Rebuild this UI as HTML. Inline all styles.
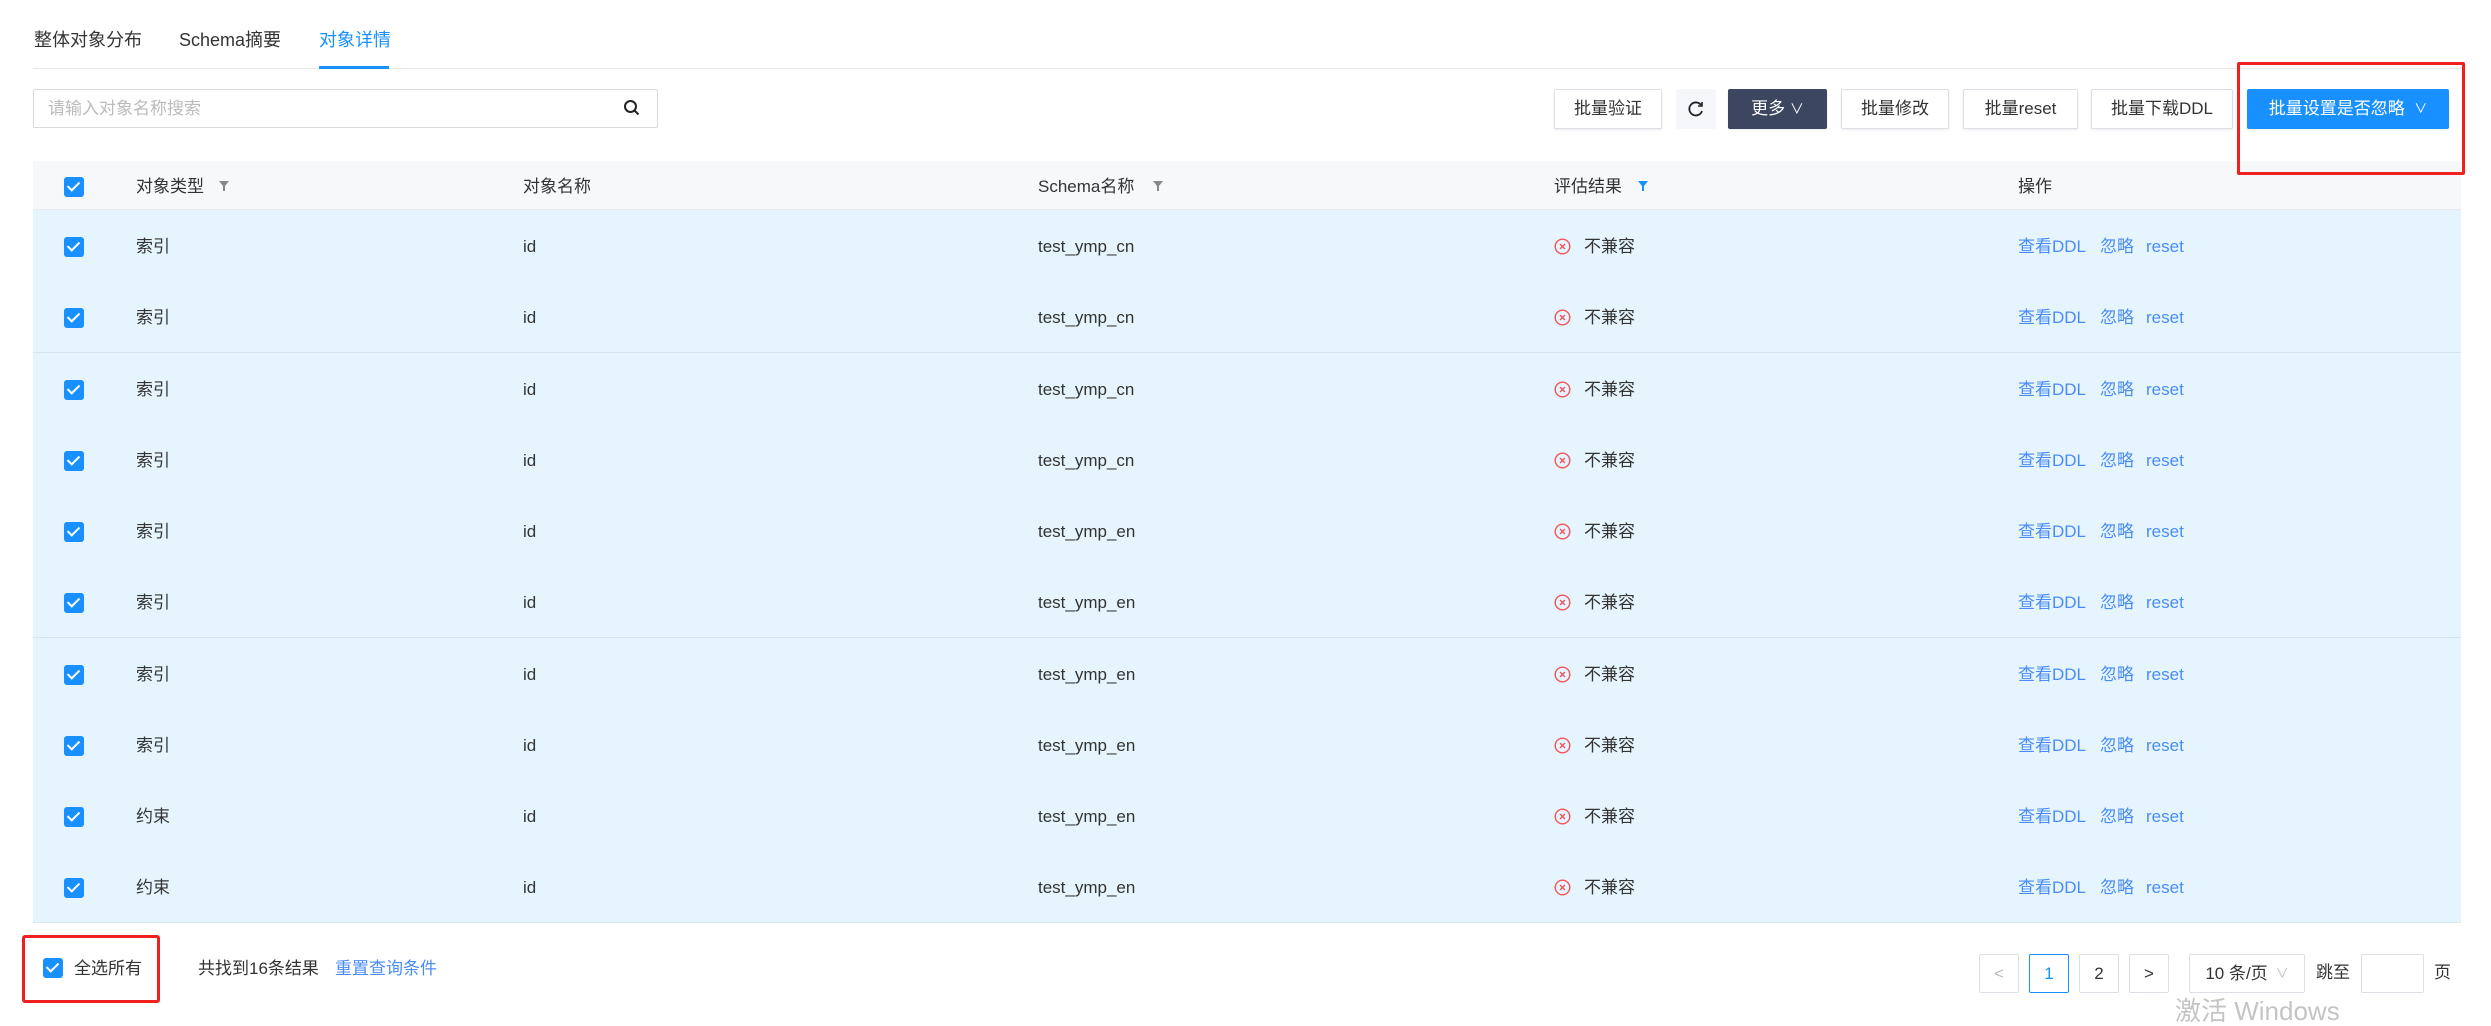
<!DOCTYPE html>
<html><head><meta charset="utf-8"><style>
*{box-sizing:border-box;margin:0;padding:0}
body{width:2491px;height:1019px;background:#fff;font-family:"Liberation Sans","Noto Sans CJK SC",sans-serif;font-size:17px;line-height:20px;color:#333;position:relative;overflow:hidden}
.a{position:absolute;white-space:nowrap}
.tab{top:30px;font-size:18px;color:#333}
.btn{position:absolute;top:89px;height:40px;border:1px solid #dcdfe6;background:#fff;border-radius:2px;display:flex;align-items:center;justify-content:center;font-size:17px;color:#333;box-shadow:0 1px 2px rgba(0,0,0,.08)}
.cb{position:absolute;width:20px;height:20px;background:#1890ff;border-radius:3px}
.cb:after{content:"";position:absolute;left:6px;top:2px;width:5px;height:10px;border:solid #fff;border-width:0 2px 2px 0;transform:rotate(45deg)}
.row{position:absolute;left:33px;width:2428px;height:72px;background:#e6f5fd;border-bottom:1px solid #d3e7f3}
.t{position:absolute;top:27px;font-size:17px;line-height:20px;color:#333;white-space:nowrap}
.ic{position:absolute;left:1521px;top:28px}
.lk{color:#4a8cf7}
.pg{position:absolute;top:954px;height:39px;border:1px solid #dcdfe6;border-radius:2px;display:flex;align-items:center;justify-content:center;font-size:17px;color:#333}
</style></head><body>
<div class="a tab" style="left:34px">整体对象分布</div>
<div class="a tab" style="left:179px">Schema摘要</div>
<div class="a tab" style="left:319px;color:#1890ff">对象详情</div>
<div class="a" style="left:33px;top:68px;width:2428px;height:1px;background:#e8e8e8"></div>
<div class="a" style="left:319px;top:66px;width:70px;height:3px;background:#1890ff"></div>
<div class="a" style="left:33px;top:89px;width:625px;height:39px;border:1px solid #d9d9d9;border-radius:2px"></div>
<div class="a" style="left:48px;top:99px;color:#bbb;font-size:17px">请输入对象名称搜索</div>
<svg class="a" style="left:622px;top:98px" width="20" height="20" viewBox="0 0 20 20"><circle cx="8.5" cy="8.5" r="5.5" fill="none" stroke="#222" stroke-width="2"/><path d="M12.5 12.5l4 4" stroke="#222" stroke-width="2"/></svg>

<div class="btn" style="left:1554px;width:108px">批量验证</div>
<div class="a" style="left:1676px;top:89px;width:40px;height:40px;background:#f5f7fa;display:flex;align-items:center;justify-content:center"><svg width="18" height="18" viewBox="0 0 18 18"><path d="M14 5A6.5 6.5 0 1 0 15 11" fill="none" stroke="#222" stroke-width="1.8"/><path d="M15 2v4h-4" fill="none" stroke="#222" stroke-width="1.6"/></svg></div>
<div class="btn" style="left:1728px;width:99px;background:#3c4660;border-color:#3c4660;color:#fff">更多&nbsp;<span style="font-size:14px">∨</span></div>
<div class="btn" style="left:1841px;width:108px">批量修改</div>
<div class="btn" style="left:1963px;width:115px">批量reset</div>
<div class="btn" style="left:2091px;width:142px">批量下载DDL</div>
<div class="btn" style="left:2247px;width:202px;background:#1890ff;border-color:#1890ff;color:#fff">批量设置是否忽略&nbsp;&nbsp;<span style="font-size:13px">∨</span></div>

<div class="a" style="left:33px;top:161px;width:2428px;height:49px;background:#f7f8fa;border-bottom:1px solid #e8eaee"></div>
<div class="cb" style="left:64px;top:177px"></div>
<div class="a" style="left:136px;top:177px">对象类型</div>
<svg class="a" style="left:218px;top:180px" width="12" height="12" viewBox="0 0 12 12"><path d="M1 1h10L7 6v5H5V6z" fill="#888"/></svg>
<div class="a" style="left:523px;top:177px">对象名称</div>
<div class="a" style="left:1038px;top:177px">Schema名称</div>
<svg class="a" style="left:1152px;top:180px" width="12" height="12" viewBox="0 0 12 12"><path d="M1 1h10L7 6v5H5V6z" fill="#888"/></svg>
<div class="a" style="left:1554px;top:177px">评估结果</div>
<svg class="a" style="left:1637px;top:180px" width="12" height="12" viewBox="0 0 12 12"><path d="M1 1h10L7 6v5H5V6z" fill="#1890ff"/></svg>
<div class="a" style="left:2018px;top:177px">操作</div>

<div class="row" style="top:210px"><div class="cb" style="left:31px;top:27px"></div><div class="t" style="left:103px">索引</div><div class="t" style="left:490px">id</div><div class="t" style="left:1005px">test_ymp_cn</div><svg class="ic" width="17" height="17" viewBox="0 0 17 17"><circle cx="8.5" cy="8.5" r="7.3" fill="none" stroke="#f5535b" stroke-width="1.4"/><path d="M6 6l5 5M11 6l-5 5" stroke="#f5535b" stroke-width="1.4"/></svg><div class="t" style="left:1551px">不兼容</div><div class="t lk" style="left:1985px">查看DDL</div><div class="t lk" style="left:2067px">忽略</div><div class="t lk" style="left:2113px">reset</div></div>
<div class="row" style="top:281px"><div class="cb" style="left:31px;top:27px"></div><div class="t" style="left:103px">索引</div><div class="t" style="left:490px">id</div><div class="t" style="left:1005px">test_ymp_cn</div><svg class="ic" width="17" height="17" viewBox="0 0 17 17"><circle cx="8.5" cy="8.5" r="7.3" fill="none" stroke="#f5535b" stroke-width="1.4"/><path d="M6 6l5 5M11 6l-5 5" stroke="#f5535b" stroke-width="1.4"/></svg><div class="t" style="left:1551px">不兼容</div><div class="t lk" style="left:1985px">查看DDL</div><div class="t lk" style="left:2067px">忽略</div><div class="t lk" style="left:2113px">reset</div></div>
<div class="row" style="top:353px"><div class="cb" style="left:31px;top:27px"></div><div class="t" style="left:103px">索引</div><div class="t" style="left:490px">id</div><div class="t" style="left:1005px">test_ymp_cn</div><svg class="ic" width="17" height="17" viewBox="0 0 17 17"><circle cx="8.5" cy="8.5" r="7.3" fill="none" stroke="#f5535b" stroke-width="1.4"/><path d="M6 6l5 5M11 6l-5 5" stroke="#f5535b" stroke-width="1.4"/></svg><div class="t" style="left:1551px">不兼容</div><div class="t lk" style="left:1985px">查看DDL</div><div class="t lk" style="left:2067px">忽略</div><div class="t lk" style="left:2113px">reset</div></div>
<div class="row" style="top:424px"><div class="cb" style="left:31px;top:27px"></div><div class="t" style="left:103px">索引</div><div class="t" style="left:490px">id</div><div class="t" style="left:1005px">test_ymp_cn</div><svg class="ic" width="17" height="17" viewBox="0 0 17 17"><circle cx="8.5" cy="8.5" r="7.3" fill="none" stroke="#f5535b" stroke-width="1.4"/><path d="M6 6l5 5M11 6l-5 5" stroke="#f5535b" stroke-width="1.4"/></svg><div class="t" style="left:1551px">不兼容</div><div class="t lk" style="left:1985px">查看DDL</div><div class="t lk" style="left:2067px">忽略</div><div class="t lk" style="left:2113px">reset</div></div>
<div class="row" style="top:495px"><div class="cb" style="left:31px;top:27px"></div><div class="t" style="left:103px">索引</div><div class="t" style="left:490px">id</div><div class="t" style="left:1005px">test_ymp_en</div><svg class="ic" width="17" height="17" viewBox="0 0 17 17"><circle cx="8.5" cy="8.5" r="7.3" fill="none" stroke="#f5535b" stroke-width="1.4"/><path d="M6 6l5 5M11 6l-5 5" stroke="#f5535b" stroke-width="1.4"/></svg><div class="t" style="left:1551px">不兼容</div><div class="t lk" style="left:1985px">查看DDL</div><div class="t lk" style="left:2067px">忽略</div><div class="t lk" style="left:2113px">reset</div></div>
<div class="row" style="top:566px"><div class="cb" style="left:31px;top:27px"></div><div class="t" style="left:103px">索引</div><div class="t" style="left:490px">id</div><div class="t" style="left:1005px">test_ymp_en</div><svg class="ic" width="17" height="17" viewBox="0 0 17 17"><circle cx="8.5" cy="8.5" r="7.3" fill="none" stroke="#f5535b" stroke-width="1.4"/><path d="M6 6l5 5M11 6l-5 5" stroke="#f5535b" stroke-width="1.4"/></svg><div class="t" style="left:1551px">不兼容</div><div class="t lk" style="left:1985px">查看DDL</div><div class="t lk" style="left:2067px">忽略</div><div class="t lk" style="left:2113px">reset</div></div>
<div class="row" style="top:638px"><div class="cb" style="left:31px;top:27px"></div><div class="t" style="left:103px">索引</div><div class="t" style="left:490px">id</div><div class="t" style="left:1005px">test_ymp_en</div><svg class="ic" width="17" height="17" viewBox="0 0 17 17"><circle cx="8.5" cy="8.5" r="7.3" fill="none" stroke="#f5535b" stroke-width="1.4"/><path d="M6 6l5 5M11 6l-5 5" stroke="#f5535b" stroke-width="1.4"/></svg><div class="t" style="left:1551px">不兼容</div><div class="t lk" style="left:1985px">查看DDL</div><div class="t lk" style="left:2067px">忽略</div><div class="t lk" style="left:2113px">reset</div></div>
<div class="row" style="top:709px"><div class="cb" style="left:31px;top:27px"></div><div class="t" style="left:103px">索引</div><div class="t" style="left:490px">id</div><div class="t" style="left:1005px">test_ymp_en</div><svg class="ic" width="17" height="17" viewBox="0 0 17 17"><circle cx="8.5" cy="8.5" r="7.3" fill="none" stroke="#f5535b" stroke-width="1.4"/><path d="M6 6l5 5M11 6l-5 5" stroke="#f5535b" stroke-width="1.4"/></svg><div class="t" style="left:1551px">不兼容</div><div class="t lk" style="left:1985px">查看DDL</div><div class="t lk" style="left:2067px">忽略</div><div class="t lk" style="left:2113px">reset</div></div>
<div class="row" style="top:780px"><div class="cb" style="left:31px;top:27px"></div><div class="t" style="left:103px">约束</div><div class="t" style="left:490px">id</div><div class="t" style="left:1005px">test_ymp_en</div><svg class="ic" width="17" height="17" viewBox="0 0 17 17"><circle cx="8.5" cy="8.5" r="7.3" fill="none" stroke="#f5535b" stroke-width="1.4"/><path d="M6 6l5 5M11 6l-5 5" stroke="#f5535b" stroke-width="1.4"/></svg><div class="t" style="left:1551px">不兼容</div><div class="t lk" style="left:1985px">查看DDL</div><div class="t lk" style="left:2067px">忽略</div><div class="t lk" style="left:2113px">reset</div></div>
<div class="row" style="top:851px"><div class="cb" style="left:31px;top:27px"></div><div class="t" style="left:103px">约束</div><div class="t" style="left:490px">id</div><div class="t" style="left:1005px">test_ymp_en</div><svg class="ic" width="17" height="17" viewBox="0 0 17 17"><circle cx="8.5" cy="8.5" r="7.3" fill="none" stroke="#f5535b" stroke-width="1.4"/><path d="M6 6l5 5M11 6l-5 5" stroke="#f5535b" stroke-width="1.4"/></svg><div class="t" style="left:1551px">不兼容</div><div class="t lk" style="left:1985px">查看DDL</div><div class="t lk" style="left:2067px">忽略</div><div class="t lk" style="left:2113px">reset</div></div>

<div class="a" style="left:2237px;top:62px;width:228px;height:113px;border:3px solid #f02020;border-radius:2px"></div>

<div class="a" style="left:22px;top:935px;width:138px;height:68px;border:3px solid #f02020;border-radius:3px"></div>
<div class="cb" style="left:43px;top:958px"></div>
<div class="a" style="left:74px;top:959px">全选所有</div>
<div class="a" style="left:198px;top:959px">共找到16条结果</div>
<div class="a lk" style="left:335px;top:959px">重置查询条件</div>

<div class="pg" style="left:1979px;width:40px;color:#bbb">&lt;</div>
<div class="pg" style="left:2029px;width:40px;border-color:#1890ff;color:#1890ff">1</div>
<div class="pg" style="left:2079px;width:40px">2</div>
<div class="pg" style="left:2129px;width:40px">&gt;</div>
<div class="pg" style="left:2189px;width:116px">10 条/页 <span style="color:#bbb;font-size:13px;margin-left:8px">∨</span></div>
<div class="a" style="left:2316px;top:963px">跳至</div>
<div class="pg" style="left:2361px;width:63px"></div>
<div class="a" style="left:2434px;top:963px">页</div>
<div class="a" style="left:2175px;top:996px;font-size:26px;line-height:30px;color:#c4c4c4">激活 Windows</div>
</body></html>
